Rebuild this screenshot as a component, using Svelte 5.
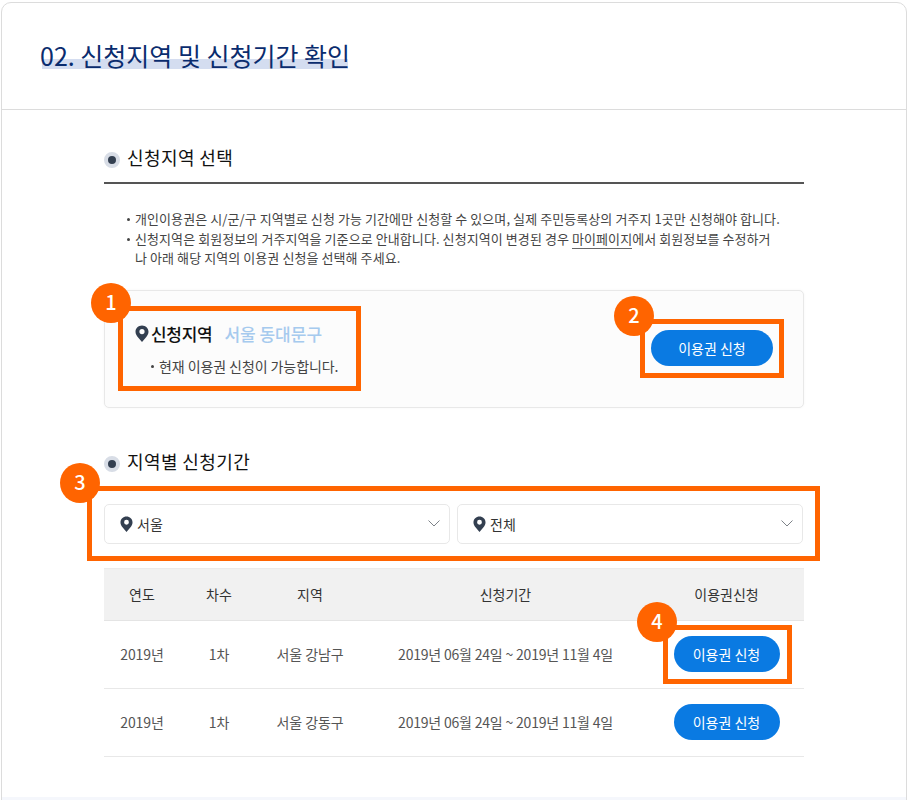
<script>
  const notes = [
    '개인이용권은 시/군/구 지역별로 신청 가능 기간에만 신청할 수 있으며, 실제 주민등록상의 거주지 1곳만 신청해야 합니다.'
  ];

  const rows = [
    { year: '2019년', round: '1차', area: '서울 강남구', period: '2019년 06월 24일 ~ 2019년 11월 4일' },
    { year: '2019년', round: '1차', area: '서울 강동구', period: '2019년 06월 24일 ~ 2019년 11월 4일' }
  ];

  const pin = 'M7 0.5C3.4 0.5 0.5 3.3 0.5 6.8c0 2.1 1 3.6 2.2 5.1L7 17l4.3-5.1c1.2-1.5 2.2-3 2.2-5.1C13.5 3.3 10.6 0.5 7 0.5zM7 9.2a2.6 2.6 0 1 1 0-5.2 2.6 2.6 0 0 1 0 5.2z';
</script>

<div class="page">
  <main class="card">
    <header class="card-head">
      <h1><span>02. 신청지역 및 신청기간 확인</span></h1>
    </header>

    <div class="content">
      <section class="sel">
        <h2 class="sec-title"><i></i>신청지역 선택</h2>
        <ul class="notes">
          {#each notes as note}
            <li>{note}</li>
          {/each}
          <li>신청지역은 회원정보의 거주지역을 기준으로 안내합니다. 신청지역이 변경된 경우 <u>마이페이지</u>에서 회원정보를 수정하거<br />나 아래 해당 지역의 이용권 신청을 선택해 주세요.</li>
        </ul>

        <div class="area-box">
          <div class="area-info">
            <div class="area-line">
              <svg class="pin" width="14" height="17" viewBox="0 0 14 17"><path d={pin} fill="#333f50" fill-rule="evenodd" /></svg>
              <strong>신청지역</strong>
              <span class="area-name">서울 동대문구</span>
            </div>
            <p class="area-msg">현재 이용권 신청이 가능합니다.</p>
          </div>
          <button class="apply big">이용권 신청</button>

          <div class="mark m1"><b>1</b></div>
          <div class="mark m2"><b>2</b></div>
        </div>
      </section>

      <section class="period">
        <h2 class="sec-title plain"><i></i>지역별 신청기간</h2>

        <div class="selects">
          {#each ['서울', '전체'] as label}
            <div class="select">
              <svg class="pin" width="13" height="16" viewBox="0 0 14 17"><path d={pin} fill="#333f50" fill-rule="evenodd" /></svg>
              <span>{label}</span>
              <svg class="chev" width="12" height="7" viewBox="0 0 12 7"><path d="M0.5 0.5l5.5 5.5 5.5-5.5" fill="none" stroke="#7d8288" stroke-width="1" /></svg>
            </div>
          {/each}
          <div class="mark m3"><b>3</b></div>
        </div>

        <div class="table-wrap">
          <table>
            <thead>
              <tr>
                <th class="c1">연도</th>
                <th class="c2">차수</th>
                <th class="c3">지역</th>
                <th class="c4">신청기간</th>
                <th class="c5">이용권신청</th>
              </tr>
            </thead>
            <tbody>
              {#each rows as row}
                <tr>
                  <td>{row.year}</td>
                  <td>{row.round}</td>
                  <td>{row.area}</td>
                  <td class="when">{row.period}</td>
                  <td><button class="apply">이용권 신청</button></td>
                </tr>
              {/each}
            </tbody>
          </table>
          <div class="mark m4"><b>4</b></div>
        </div>
      </section>
    </div>
  </main>
</div>

<style>
  :global(body) {
    margin: 0;
    background: #fff;
    font-family: "Noto Sans CJK KR", "Noto Sans", sans-serif;
  }

  .page {
    height: 800px;
    padding: 2px 1px 0;
    box-sizing: border-box;
    overflow: hidden;
  }

  .card {
    height: 820px;
    box-sizing: border-box;
    background: linear-gradient(#fff 794px, #f5f7fc 794px);
    border: 1px solid #dcdcdc;
    border-radius: 10px;
    width: 906px;
  }

  .card-head {
    height: 106px;
    box-sizing: content-box;
    border-bottom: 1px solid #dcdcdc;
    padding: 0 0 0 38px;
    display: flex;
    align-items: flex-start;
  }

  h1 {
    margin: 34px 0 0;
    font-size: 25px;
    font-weight: 400;
    line-height: 36px;
    letter-spacing: 0;
    color: #0a2c6e;
  }

  h1 span {
    background: linear-gradient(#d4ddf0, #d4ddf0) no-repeat center 22px / calc(100% - 4px) 10px;
  }

  .content {
    width: 700px;
    margin-left: 102px;
  }

  .sec-title {
    margin: 0;
    height: 74px;
    padding-top: 32px;
    box-sizing: border-box;
    border-bottom: 2px solid #555;
    display: flex;
    align-items: flex-start;
    font-size: 18px;
    font-weight: 400;
    line-height: 30px;
    letter-spacing: 0.4px;
    color: #111;
  }

  .sec-title i {
    width: 16px;
    height: 16px;
    margin: 10px 7px 0 0;
    border-radius: 50%;
    background: #333f50;
    border: 4px solid #d8dde6;
    box-sizing: border-box;
  }

  .sec-title.plain {
    border-bottom: 0;
    height: auto;
    padding-top: 38px;
  }

  .notes {
    list-style: none;
    margin: 0;
    padding: 25px 0 0 31px;
    font-size: 13px;
    line-height: 19.5px;
    letter-spacing: 0.08px;
    color: #444;
  }

  .notes li {
    position: relative;
  }

  .notes li::before {
    content: "";
    position: absolute;
    left: -8px;
    top: 9px;
    width: 3px;
    height: 3px;
    border-radius: 50%;
    background: #444;
  }

  .notes u {
    text-decoration: none;
    border-bottom: 1px solid #666;
  }

  .area-box {
    position: relative;
    margin-top: 22px;
    height: 118px;
    box-sizing: border-box;
    border: 1px solid #e8e8e8;
    border-radius: 5px;
    background: #fcfcfc;
    box-shadow: 0 0 3px rgba(0, 0, 0, 0.04);
    display: flex;
    justify-content: space-between;
    align-items: center;
    padding: 0 30px 2px 30px;
  }

  .area-info {
    margin-top: 1px;
  }

  .area-line {
    display: flex;
    align-items: center;
    font-size: 17px;
    line-height: 26px;
  }

  .area-line .pin {
    margin-right: 2px;
  }

  .area-line strong {
    font-weight: 500;
    color: #111;
    letter-spacing: -0.3px;
  }

  .area-name {
    margin-left: 12px;
    color: #a6caee;
    font-weight: 500;
    letter-spacing: 0;
  }

  .area-msg {
    margin: 9px 0 0 15px;
    font-size: 14px;
    line-height: 20px;
    letter-spacing: -0.08px;
    color: #444;
    position: relative;
    padding-left: 9px;
  }

  .area-msg::before {
    content: "";
    position: absolute;
    left: 1px;
    top: 9px;
    width: 3px;
    height: 3px;
    border-radius: 50%;
    background: #444;
  }

  .apply {
    width: 106px;
    height: 36px;
    border: 0;
    border-radius: 18px;
    background: #0a7ae2;
    color: #fff;
    font: 400 14px "Noto Sans CJK KR", sans-serif;
    padding: 0;
  }

  .apply.big {
    width: 122px;
  }

  .selects {
    position: relative;
    display: flex;
    gap: 7px;
    margin-top: 28px;
  }

  .select {
    width: 346px;
    height: 40px;
    box-sizing: border-box;
    border: 1px solid #e8e8e8;
    border-radius: 5px;
    background: #fff;
    display: flex;
    align-items: center;
    padding: 0 9px 0 15px;
    font-size: 14px;
    color: #333;
  }

  .select span {
    margin-left: 4px;
    flex: 1;
  }

  .table-wrap {
    position: relative;
    margin-top: 24px;
  }

  table {
    width: 700px;
    border-collapse: collapse;
    table-layout: fixed;
    font-size: 14px;
    color: #555;
    text-align: center;
  }

  th {
    height: 51px;
    padding: 0;
    background: #f1f1f1;
    border-top: 1px solid #ebebeb;
    border-bottom: 1px solid #e4e4e4;
    font-weight: 400;
    color: #333;
  }

  td {
    height: 67px;
    padding: 0;
    border-bottom: 1px solid #e8e8e8;
    letter-spacing: -0.1px;
  }

  .when {
    letter-spacing: -0.2px;
  }

  .c1 { width: 76px; }
  .c2 { width: 78px; }
  .c3 { width: 104px; }
  .c4 { width: 287px; }

  .mark {
    position: absolute;
    box-sizing: border-box;
    border: 5px solid #ff6400;
    pointer-events: none;
  }

  .mark b {
    position: absolute;
    width: 40px;
    height: 40px;
    border-radius: 50%;
    background: #ff6400;
    color: #fff;
    font-size: 20px;
    font-weight: 500;
    line-height: 38px;
    text-align: center;
  }

  .m1 { left: 13px; top: 15px; width: 243px; height: 85px; }
  .m1 b { left: -32px; top: -28px; }
  .m2 { left: 535px; top: 28px; width: 144px; height: 59px; }
  .m2 b { left: -31px; top: -28px; }
  .m3 { left: -17px; top: -18px; width: 733px; height: 75px; }
  .m3 b { left: -32px; top: -28px; }
  .m4 { left: 559px; top: 57px; width: 129px; height: 59px; }
  .m4 b { left: -31px; top: -28px; }
</style>
